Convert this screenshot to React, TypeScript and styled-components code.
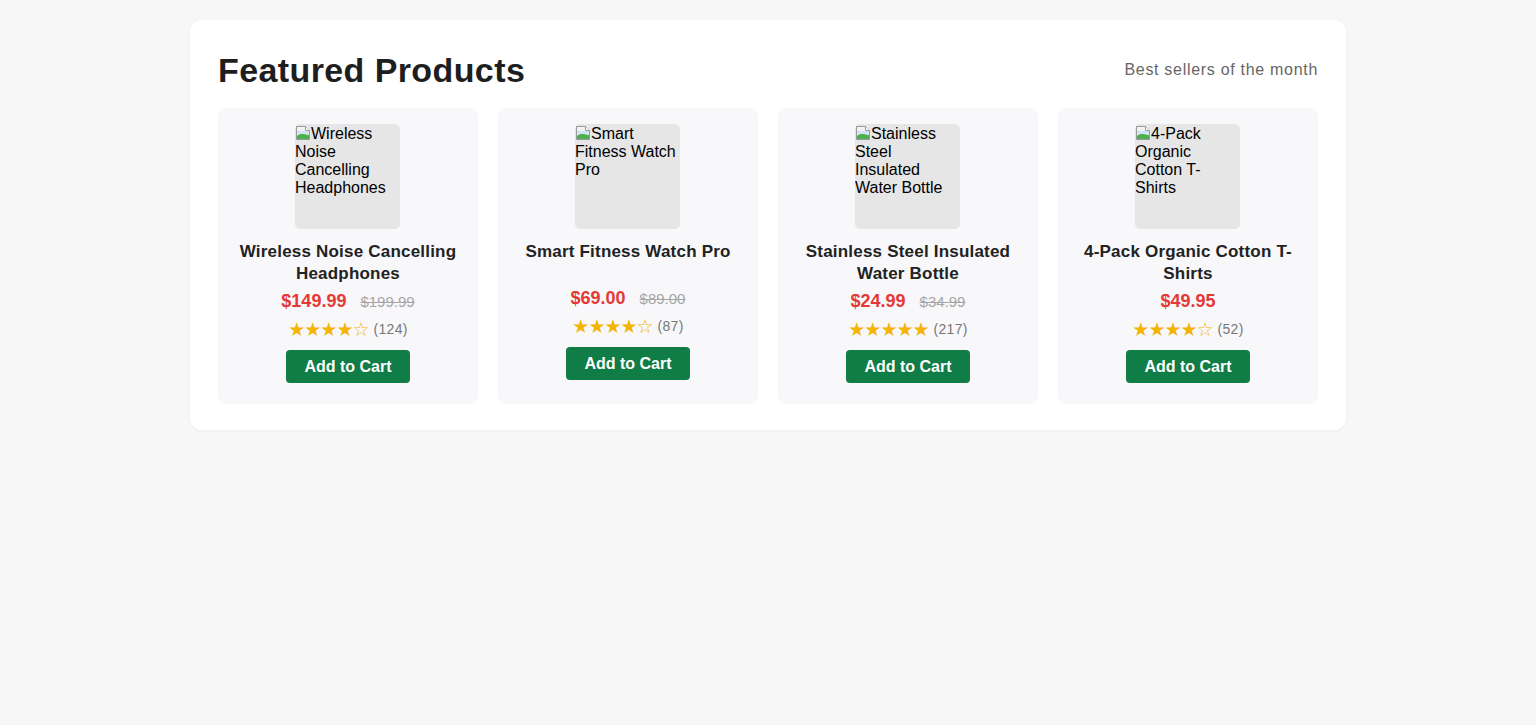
import styled, { createGlobalStyle } from "styled-components";

const GlobalStyle = createGlobalStyle`
  * { box-sizing: border-box; }
  body {
    margin: 0;
    background: #f7f7f7;
    font-family: "Liberation Sans", Arial, sans-serif;
    color: #222;
  }
`;

type Product = {
  name: string;
  price: string;
  was?: string;
  stars: number;
  reviews: number;
};

const products: Product[] = [
  { name: "Wireless Noise Cancelling Headphones", price: "$149.99", was: "$199.99", stars: 4, reviews: 124 },
  { name: "Smart Fitness Watch Pro", price: "$69.00", was: "$89.00", stars: 4, reviews: 87 },
  { name: "Stainless Steel Insulated Water Bottle", price: "$24.99", was: "$34.99", stars: 5, reviews: 217 },
  { name: "4-Pack Organic Cotton T-Shirts", price: "$49.95", stars: 4, reviews: 52 },
];

function BrokenImage() {
  return (
    <BrokenIcon width="16" height="16" viewBox="0 0 16 16">
      <path d="M1.5 1.5h9l4 4v9h-13z" fill="#f2f2f2" stroke="#9a9a9a" />
      <path d="M10.5 1.5v4h4" fill="#fff" stroke="#9a9a9a" />
      <path d="M2 6h8l4 0v3H2z" fill="#cfe3f5" />
      <path d="M2 14V11c3-3 6-2 12-1v4z" fill="#4caf50" />
    </BrokenIcon>
  );
}

export default function App() {
  return (
    <>
      <GlobalStyle />
      <Section>
        <Header>
          <Title>Featured Products</Title>
          <Subtitle>Best sellers of the month</Subtitle>
        </Header>
        <Grid>
          {products.map((p) => (
            <Card key={p.name}>
              <ImageBox>
                <BrokenImage />
                {p.name}
              </ImageBox>
              <Name>{p.name}</Name>
              <PriceRow>
                <Price>{p.price}</Price>
                {p.was && <Was>{p.was}</Was>}
              </PriceRow>
              <RatingRow>
                <Stars>
                  {"★".repeat(p.stars)}
                  {"☆".repeat(5 - p.stars)}
                </Stars>
                <Count>({p.reviews})</Count>
              </RatingRow>
              <CartButton>Add to Cart</CartButton>
            </Card>
          ))}
        </Grid>
      </Section>
    </>
  );
}

const Section = styled.section`
  width: 1156px;
  margin: 20px auto;
  padding: 28px 28px 26px;
  background: #fff;
  border-radius: 12px;
  box-shadow: 0 1px 4px rgba(0, 0, 0, 0.04);
`;

const Header = styled.div`
  display: flex;
  align-items: center;
  justify-content: space-between;
  height: 40px;
  margin-top: 2px;
  margin-bottom: 18px;
`;

const Title = styled.h2`
  margin: 0;
  font-size: 34px;
  line-height: 40px;
  font-weight: 700;
  letter-spacing: 0.4px;
  color: #1e1e1e;
`;

const Subtitle = styled.span`
  font-size: 16px;
  color: #666;
  letter-spacing: 0.7px;
`;

const Grid = styled.div`
  display: grid;
  grid-template-columns: repeat(4, 1fr);
  gap: 20px;
`;

const Card = styled.div`
  display: flex;
  flex-direction: column;
  align-items: center;
  padding: 16px 16px 21px;
  background: #f8f8fa;
  border-radius: 8px;
  text-align: center;
`;

const ImageBox = styled.div`
  width: 105px;
  height: 105px;
  margin-right: 1px;
  background: #e6e6e6;
  border-radius: 5px;
  font-size: 16px;
  line-height: 18px;
  padding-top: 1px;
  color: #000;
  text-align: left;
  overflow: hidden;
`;

const BrokenIcon = styled.svg`
  vertical-align: -2px;
`;

const Name = styled.h3`
  margin: 12px 0 0;
  min-height: 41px;
  font-size: 17px;
  line-height: 22px;
  font-weight: 700;
  letter-spacing: 0.2px;
  color: #222;
`;

const PriceRow = styled.div`
  display: flex;
  align-items: center;
  gap: 14px;
  margin-top: 6px;
  height: 20px;
`;

const Price = styled.span`
  font-size: 18px;
  font-weight: 700;
  color: #e53935;
`;

const Was = styled.span`
  font-size: 15px;
  color: #a6a6a6;
  text-decoration: line-through;
`;

const RatingRow = styled.div`
  display: flex;
  align-items: center;
  gap: 5px;
  margin-top: 8px;
  height: 20px;
`;

const Stars = styled.span`
  font-size: 19px;
  color: #f4b400;
  letter-spacing: -1px;
  font-family: "DejaVu Sans", sans-serif;
`;

const Count = styled.span`
  font-size: 14px;
  letter-spacing: 0.3px;
  color: #777;
`;

const CartButton = styled.button`
  margin-top: 11px;
  padding: 7px 18px;
  height: 33px;
  border: none;
  border-radius: 4px;
  background: #107c46;
  color: #fff;
  font-family: "Liberation Sans", Arial, sans-serif;
  font-size: 16px;
  font-weight: 700;
  cursor: pointer;
`;
